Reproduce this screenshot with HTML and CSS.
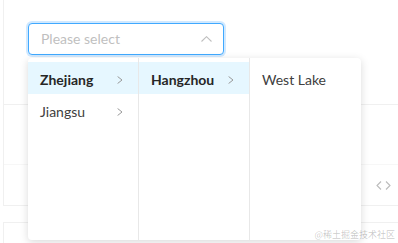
FILE: index.html
```html
<!DOCTYPE html>
<html lang="en">
<head>
    <meta charset="UTF-8">
    <title>Cascader</title>
    <link rel="stylesheet" href="styles.css">
</head>
<body>
    <div class="page">
        <div class="card">
            <div class="demo">
                <div class="select">
                    <span class="placeholder">Please select</span>
                    <svg class="arrow-up" width="11" height="6" viewBox="0 0 11 6">
                        <polyline points="0.5,5.5 5.5,0.7 10.5,5.5" fill="none" stroke="#bfbfbf" stroke-width="1.1"/>
                    </svg>
                </div>
            </div>
            <div class="row"></div>
            <div class="row row-nav">
                <span class="nav">
                    <svg width="6" height="9" viewBox="0 0 6 9"><polyline points="5,0.5 1,4.5 5,8.5" fill="none" stroke="#bbb" stroke-width="1.1"/></svg>
                    <svg width="6" height="9" viewBox="0 0 6 9"><polyline points="1,0.5 5,4.5 1,8.5" fill="none" stroke="#bbb" stroke-width="1.1"/></svg>
                </span>
            </div>
        </div>
        <div class="card card-next"></div>
    </div>

    <div class="dropdown">
        <ul class="menu">
            <li class="item active">Zhejiang
                <svg class="expand" width="6" height="8" viewBox="0 0 6 8"><polyline points="0.6,0.5 5,4 0.6,7.5" fill="none" stroke="#999" stroke-width="1"/></svg>
            </li>
            <li class="item">Jiangsu
                <svg class="expand" width="6" height="8" viewBox="0 0 6 8"><polyline points="0.6,0.5 5,4 0.6,7.5" fill="none" stroke="#999" stroke-width="1"/></svg>
            </li>
        </ul>
        <ul class="menu">
            <li class="item active">Hangzhou
                <svg class="expand" width="6" height="8" viewBox="0 0 6 8"><polyline points="0.6,0.5 5,4 0.6,7.5" fill="none" stroke="#999" stroke-width="1"/></svg>
            </li>
        </ul>
        <ul class="menu">
            <li class="item">West Lake</li>
        </ul>
    </div>

    <div class="watermark">@稀土掘金技术社区</div>
</body>
</html>
```

FILE: styles.css
```css
* {
    margin: 0;
    padding: 0;
    box-sizing: border-box;
}

body {
    background: #fff;
    font-family: Lato, "Noto Sans", "Noto Sans CJK SC", sans-serif;
    font-size: 14px;
    color: #595959;
    overflow: hidden;
}

.page {
    width: 398px;
    height: 243px;
    overflow: hidden;
}

.card {
    margin-left: 3px;
    width: 420px;
    border-left: 1px solid #f0f0f0;
    border-bottom: 1px solid #f0f0f0;
}

.demo {
    height: 105px;
    padding: 23px 0 0 24px;
    border-bottom: 1px solid #f0f0f0;
}

.select {
    width: 196px;
    height: 32px;
    border: 1px solid #40a9ff;
    border-radius: 4px;
    box-shadow: 0 0 0 2px rgba(24, 144, 255, 0.2);
    display: flex;
    align-items: center;
    justify-content: space-between;
    padding: 0 11px 0 12px;
    background: #fff;
}

.placeholder {
    color: #bfbfbf;
    line-height: 22px;
}

.arrow-up {
    margin-top: -1px;
}

.row {
    height: 60px;
    border-bottom: 1px solid #f7f7f7;
}

.row-nav {
    height: 40px;
    border-bottom: none;
    display: flex;
    align-items: center;
    padding-left: 372px;
}

.nav {
    display: flex;
    gap: 3px;
}

.card-next {
    margin-top: 16px;
    height: 40px;
    border-top: 1px solid #f0f0f0;
    border-bottom: none;
}

.dropdown {
    position: absolute;
    left: 28px;
    top: 58px;
    display: flex;
    background: #fff;
    border-radius: 4px;
    box-shadow: 0 2px 8px rgba(0, 0, 0, 0.15);
}

.menu {
    list-style: none;
    width: 111px;
    height: 182px;
    padding: 4px 0;
    border-right: 1px solid #e8e8e8;
}

.menu:last-child {
    border-right: none;
}

.item {
    height: 32px;
    padding: 7px 12px 3px;
    line-height: 22px;
    display: flex;
    align-items: center;
    justify-content: space-between;
    color: #404040;
}

.item.active {
    background: #e6f7ff;
    font-weight: 700;
    color: #262626;
}

.expand {
    margin-right: 3px;
}

.watermark {
    position: absolute;
    right: 3px;
    bottom: 2px;
    font-family: "Noto Sans CJK SC", sans-serif;
    font-size: 9px;
    color: rgba(0, 0, 0, 0.22);
}
```
